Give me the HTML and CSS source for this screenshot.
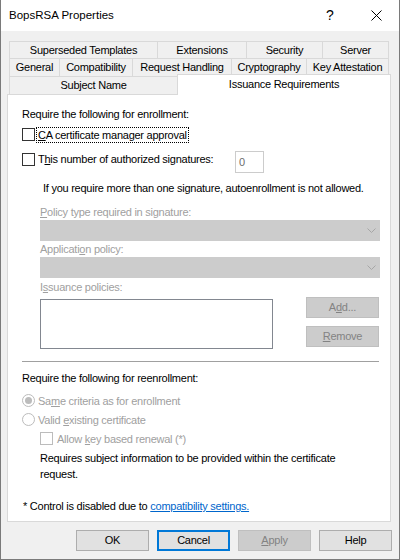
FILE: index.html
```html
<!DOCTYPE html>
<html>
<head>
<meta charset="utf-8">
<title>BopsRSA Properties</title>
<link rel="stylesheet" href="styles.css">
</head>
<body>
<div class="window">
  <div class="titlebar">
    <span class="title">BopsRSA Properties</span>
    <span class="tbtn help">?</span>
    <span class="tbtn close"><svg width="11" height="11" viewBox="0 0 11 11"><path d="M0.5 0.5L10.5 10.5M10.5 0.5L0.5 10.5" stroke="#000" stroke-width="1" fill="none"/></svg></span>
  </div>
  <div class="main">
    <div class="tabs">
      <div class="tabrow r1">
        <div class="tab">Superseded Templates</div>
        <div class="tab">Extensions</div>
        <div class="tab">Security</div>
        <div class="tab last">Server</div>
      </div>
      <div class="tabrow r2">
        <div class="tab">General</div>
        <div class="tab">Compatibility</div>
        <div class="tab">Request Handling</div>
        <div class="tab">Cryptography</div>
        <div class="tab last">Key Attestation</div>
      </div>
      <div class="tabrow r3">
        <div class="tab">Subject Name</div>
        <div class="tab sel">Issuance Requirements</div>
      </div>
    </div>
    <div class="panel">
      <div class="heading">Require the following for enrollment:</div>
      <div class="row cbrow">
        <span class="cb"></span>
        <span class="focus"><u>C</u>A certificate manager approval</span>
      </div>
      <div class="row sigrow">
        <span class="cb"></span>
        <span class="siglabel">T<u>h</u>is number of authorized signatures:</span>
        <span class="num">0</span>
      </div>
      <div class="note">If you require more than one signature, autoenrollment is not allowed.</div>
      <div class="indent">
        <div class="lbl l1"><u>P</u>olicy type required in signature:</div>
        <div class="combo"><svg width="9" height="5" viewBox="0 0 9 5"><path d="M0.5 0.5L4.5 4.5L8.5 0.5" stroke="#a6a6a6" fill="none"/></svg></div>
        <div class="lbl l2">Applicati<u>o</u>n policy:</div>
        <div class="combo"><svg width="9" height="5" viewBox="0 0 9 5"><path d="M0.5 0.5L4.5 4.5L8.5 0.5" stroke="#a6a6a6" fill="none"/></svg></div>
        <div class="lbl l3">I<u>s</u>suance policies:</div>
        <div class="listrow">
          <div class="listbox"></div>
          <div class="sidebtns">
            <div class="btn disabled">A<u>d</u>d...</div>
            <div class="btn disabled"><u>R</u>emove</div>
          </div>
        </div>
      </div>
      <div class="sep"></div>
      <div class="heading h2">Require the following for reenrollment:</div>
      <div class="row rrow first">
        <span class="radio checked"></span>
        <span class="dis rlabel">Sa<u>m</u>e criteria as for enrollment</span>
      </div>
      <div class="row rrow">
        <span class="radio"></span>
        <span class="dis rlabel">Valid <u>e</u>xisting certificate</span>
      </div>
      <div class="row rrow cb3row">
        <span class="cb off"></span>
        <span class="dis cb3label">Allow <u>k</u>ey based renewal (*)</span>
      </div>
      <div class="requires">Requires subject information to be provided within the certificate<br>request.</div>
      <div class="footnote">* Control is disabled due to <span class="link">compatibility settings.</span></div>
    </div>
    <div class="buttons">
      <div class="btn">OK</div>
      <div class="btn default">Cancel</div>
      <div class="btn disabled"><u>A</u>pply</div>
      <div class="btn">Help</div>
    </div>
  </div>
</div>
</body>
</html>
```

FILE: styles.css
```css
* { box-sizing: border-box; }
html, body { margin: 0; padding: 0; background: #ffffff; }
body {
  font-family: "Liberation Sans", Arial, sans-serif;
  font-size: 11px;
  letter-spacing: -0.25px;
  color: #000000;
}
u { text-decoration: underline; text-underline-offset: 1px; }

.window {
  width: 400px;
  height: 560px;
  border: 1px solid #7a7a7a;
  border-top: none;
  background: #f0f0f0;
  display: flex;
  flex-direction: column;
}

.titlebar {
  height: 31px;
  background: #ffffff;
  display: flex;
  flex: none;
}
.title {
  flex: 1;
  padding-left: 8px;
  line-height: 31px;
  font-size: 11.5px;
  letter-spacing: 0;
}
.tbtn {
  width: 46px;
  display: flex;
  align-items: center;
  justify-content: center;
}
.help { font-size: 14px; padding-bottom: 1px; letter-spacing: 0; }
.close svg { display: block; }

.main {
  flex: 1;
  padding-top: 10px;
  display: flex;
  flex-direction: column;
}

.tabs {
  margin-left: 8px;
  width: 380px;
  display: flex;
  flex-direction: column;
}
.tabrow { display: grid; }
.r1 { grid-template-columns: 148px 89px 76px 67px; height: 17px; }
.r2 { grid-template-columns: 50px 73px 99px 75px 83px; height: 18px; }
.r3 { grid-template-columns: 168px 214px; height: 18px; }
.tab {
  border-top: 1px solid #d9d9d9;
  border-left: 1px solid #d9d9d9;
  background: #f0f0f0;
  text-align: center;
  white-space: nowrap;
  line-height: 17px;
}
.r1 .tab { line-height: 16px; }
.tab.last { border-right: 1px solid #d9d9d9; }
.tab.sel {
  align-self: start;
  height: 21px;
  margin-top: -2px;
  line-height: 18px;
  background: #ffffff;
  border-right: 1px solid #d9d9d9;
  position: relative;
  z-index: 1;
}

.panel {
  margin-left: 6px;
  width: 384px;
  height: 428px;
  flex: none;
  background: #ffffff;
  border: 1px solid #d9d9d9;
  padding: 11px 10px 0 14px;
}

.heading { line-height: 16px; white-space: nowrap; }
.row { display: flex; white-space: nowrap; }
.cb {
  width: 13px;
  height: 13px;
  border: 1px solid #333333;
  background: #ffffff;
  flex: none;
}
.cb.off { border-color: #bcbcbc; }

.cbrow { margin-top: 4px; height: 17px; align-items: center; }
.focus {
  margin-left: 1px;
  border: 1px dotted #000000;
  padding: 0 1px;
  line-height: 14px;
}

.sigrow { margin-top: 8px; height: 22px; align-items: flex-start; }
.sigrow .cb { margin-top: 2px; }
.siglabel { margin-left: 3px; width: 197px; line-height: 16px; }
.num {
  width: 29px;
  height: 22px;
  border: 1px solid #cccccc;
  padding-left: 3px;
  line-height: 20px;
  color: #6d6d6d;
}

.note { margin-top: 7px; padding-left: 21px; line-height: 16px; white-space: nowrap; }

.indent { margin-left: 18px; }
.lbl { color: #a0a0a0; line-height: 15px; }
.l1 { margin-top: 9px; }
.l2 { margin-top: 1px; }
.l3 { margin-top: 2px; }
.combo {
  height: 21px;
  background: #cccccc;
  border: 1px solid #cccccc;
  display: flex;
  align-items: center;
  justify-content: flex-end;
  padding-right: 3px;
}
.combo svg { display: block; }

.listrow {
  margin-top: 2px;
  display: flex;
  justify-content: space-between;
}
.listbox {
  margin-top: 2px;
  width: 233px;
  height: 50px;
  border: 1px solid #828790;
  background: #ffffff;
}
.sidebtns {
  width: 73px;
  margin-right: 1px;
  display: flex;
  flex-direction: column;
  gap: 8px;
}

.btn {
  width: 73px;
  height: 21px;
  border: 1px solid #adadad;
  background: #e1e1e1;
  text-align: center;
  line-height: 19px;
  color: #000000;
}
.btn.disabled {
  background: #cccccc;
  border-color: #bfbfbf;
  color: #838383;
}
.btn.default {
  border: 2px solid #0078d7;
  line-height: 17px;
}

.sep {
  margin-top: 12px;
  margin-right: 1px;
  height: 1px;
  background: #a0a0a0;
}
.h2 { margin-top: 8px; }

.rrow { height: 17px; align-items: center; margin-top: 2px; }
.rrow.first { margin-top: 6px; }
.radio {
  width: 13px;
  height: 13px;
  border-radius: 50%;
  border: 1px solid #bcbcbc;
  background: #ffffff;
  flex: none;
  display: flex;
  align-items: center;
  justify-content: center;
}
.radio.checked::after {
  content: "";
  width: 7px;
  height: 7px;
  border-radius: 50%;
  background: #bcbcbc;
}
.dis { color: #a0a0a0; }
.rlabel { margin-left: 3px; }
.cb3row { padding-left: 18px; }
.cb3label { margin-left: 4px; }

.requires { margin-top: 3px; padding-left: 18px; line-height: 16px; white-space: nowrap; }
.footnote { margin-top: 16px; padding-left: 1px; line-height: 16px; white-space: nowrap; }
.link { color: #0066cc; text-decoration: underline; }

.buttons {
  margin-top: 8px;
  margin-left: 75px;
  display: flex;
  gap: 8px;
}
```
